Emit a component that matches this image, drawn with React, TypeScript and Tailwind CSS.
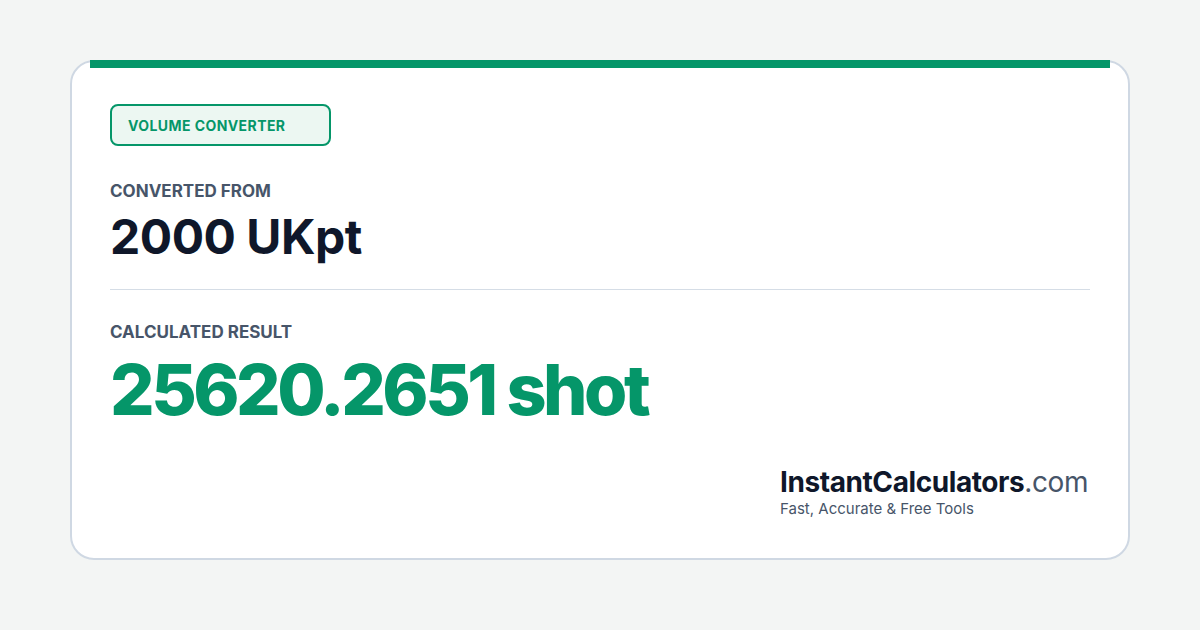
export default function App() {
  return (
    <div
      className="flex h-[630px] w-[1200px] items-start justify-center bg-[#f3f5f4] pt-[60px]"
      style={{ fontFamily: 'Inter, "Noto Sans", sans-serif' }}
    >
      <div className="flex h-[500px] w-[1060px] flex-col rounded-[24px] border-2 border-[#cfd8e3] bg-white">
        <div className="mx-[18px] -mt-[2px] h-[8px] bg-[#059669]" />
        <div className="flex flex-1 flex-col px-[38px] pt-[36px]">
          <div className="flex h-[42px] w-[221px] items-center rounded-[8px] border-2 border-[#059669] bg-[#ecf7f2] px-[16px]">
            <span className="text-[14px] font-bold tracking-[0.03em] text-[#059669]">VOLUME CONVERTER</span>
          </div>
          <div className="mt-[33px] text-[17px] leading-[24px] font-bold text-[#475569]">CONVERTED FROM</div>
          <div className="mt-[6px] text-[48px] leading-[56px] font-bold tracking-[-0.01em] text-[#0f172a]">2000 UKpt</div>
          <div className="mt-[24px] h-px bg-[#d5dde6]" />
          <div className="mt-[30px] text-[17px] leading-[24px] font-bold text-[#475569]">CALCULATED RESULT</div>
          <div className="mt-[8px] text-[70px] leading-[76px] font-extrabold tracking-[-0.05em] text-[#059669]">
            25620.2651 shot
          </div>
          <div className="mt-auto mb-[40px] ml-auto mr-[2px] flex flex-col">
            <div className="text-[28px] leading-[32px] tracking-[-0.015em] text-[#0f172a]">
              <span className="font-bold">InstantCalculators</span>
              <span className="font-normal text-[#475569]">.com</span>
            </div>
            <div className="mt-[2px] text-[15px] leading-[18px] text-[#475569]">Fast, Accurate &amp; Free Tools</div>
          </div>
        </div>
      </div>
    </div>
  )
}
